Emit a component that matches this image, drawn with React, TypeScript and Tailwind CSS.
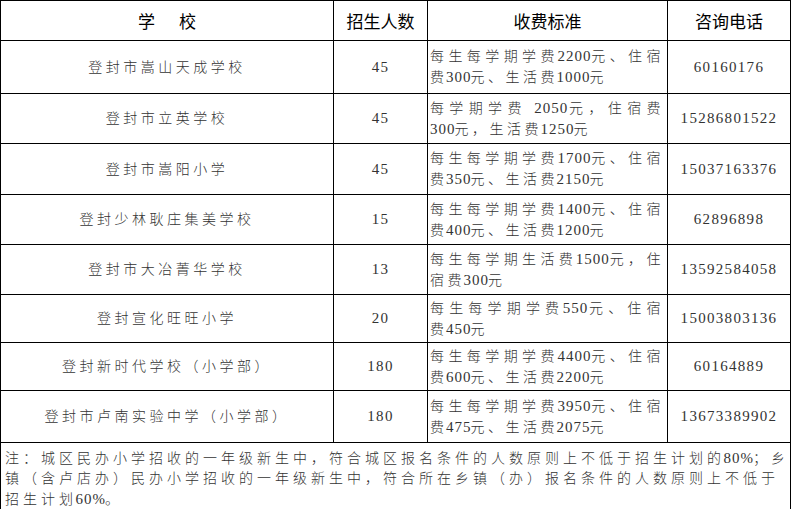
import React from 'react';

interface SchoolRow {
  name: string;
  count: string;
  fee: [string, string];
  phone: string;
  h: string;
}

const rows: SchoolRow[] = [
  { name: '登封市嵩山天成学校', count: '45', fee: ['每生每学期学费2200元、住宿', '费300元、生活费1000元'], phone: '60160176', h: 'h-[53px]' },
  { name: '登封市立英学校', count: '45', fee: ['每学期学费 2050元，住宿费', '300元，生活费1250元'], phone: '15286801522', h: 'h-[50px]' },
  { name: '登封市嵩阳小学', count: '45', fee: ['每生每学期学费1700元、住宿', '费350元、生活费2150元'], phone: '15037163376', h: 'h-[51px]' },
  { name: '登封少林耿庄集美学校', count: '15', fee: ['每生每学期学费1400元、住宿', '费400元、生活费1200元'], phone: '62896898', h: 'h-[50px]' },
  { name: '登封市大冶菁华学校', count: '13', fee: ['每生每学期生活费1500元，住', '宿费300元'], phone: '13592584058', h: 'h-[50px]' },
  { name: '登封宣化旺旺小学', count: '20', fee: ['每生每学期学费550元、住宿', '费450元'], phone: '15003803136', h: 'h-[48px]' },
  { name: '登封新时代学校（小学部）', count: '180', fee: ['每生每学期学费4400元、住宿', '费600元、生活费2200元'], phone: '60164889', h: 'h-[48px]' },
  { name: '登封市卢南实验中学（小学部）', count: '180', fee: ['每生每学期学费3950元、住宿', '费475元、生活费2075元'], phone: '13673389902', h: 'h-[52px]' },
];

// digits are set in a narrower serif run with little tracking, like the source PDF
function Mixed({ text }: { text: string }) {
  const parts = text.split(/(\d+%?)/);
  return (
    <>
      {parts.map((p, i) =>
        /\d/.test(p) ? (
          <span
            key={i}
            className={`text-[15px] tracking-[1px] -mr-[1px] ${i > 0 && parts[i - 1] !== '' ? '-ml-[1.5px]' : ''}`}
          >
            {p}
          </span>
        ) : (
          <span key={i}>{p}</span>
        )
      )}
    </>
  );
}

const body = "font-['Liberation_Serif','Noto_Sans_CJK_SC',serif] font-light text-[#333]";
const head = "font-['Noto_Sans_CJK_SC',sans-serif] text-[17px] text-black font-normal";

export default function App() {
  return (
    <div className="w-[792px] h-[509px] bg-white">
      <table className="table-fixed border-collapse w-[790px]">
        <colgroup>
          <col className="w-[333px]" />
          <col className="w-[94px]" />
          <col className="w-[240px]" />
          <col className="w-[123px]" />
        </colgroup>
        <thead>
          <tr className="h-[40px]">
            <th className={`border border-black text-center ${head}`}>
              <span className="mr-[24px]">学</span>校
            </th>
            <th className={`border border-black text-center ${head}`}>招生人数</th>
            <th className={`border border-black text-center ${head}`}>收费标准</th>
            <th className={`border border-black text-center ${head}`}>咨询电话</th>
          </tr>
        </thead>
        <tbody>
          {rows.map((r) => (
            <tr key={r.name} className={r.h}>
              <td className={`border border-black text-center text-[14px] tracking-[3.5px] ${body}`}>{r.name}</td>
              <td className={`border border-black text-center text-[15px] tracking-[1.3px] ${body}`}>{r.count}</td>
              <td className={`border border-black pl-[2px] pr-[3px] text-[14px] tracking-[3.5px] leading-[21px] ${body}`}>
                <div className="whitespace-nowrap text-justify [text-align-last:justify]">
                  <Mixed text={r.fee[0]} />
                </div>
                <div className="whitespace-nowrap">
                  <Mixed text={r.fee[1]} />
                </div>
              </td>
              <td className={`border border-black text-center text-[15px] tracking-[1.3px] ${body}`}>{r.phone}</td>
            </tr>
          ))}
          <tr className="h-[66px]">
            <td
              colSpan={4}
              className={`border border-black align-top pl-[4px] pr-[3px] pt-[5px] text-[14px] tracking-[4px] leading-[20px] ${body}`}
            >
              <div className="whitespace-nowrap text-justify [text-align-last:justify]">
                <Mixed text="注：城区民办小学招收的一年级新生中，符合城区报名条件的人数原则上不低于招生计划的80%；乡" />
              </div>
              <div className="whitespace-nowrap">
                <Mixed text="镇（含卢店办）民办小学招收的一年级新生中，符合所在乡镇（办）报名条件的人数原则上不低于" />
              </div>
              <div className="whitespace-nowrap">
                <Mixed text="招生计划60%。" />
              </div>
            </td>
          </tr>
        </tbody>
      </table>
    </div>
  );
}
